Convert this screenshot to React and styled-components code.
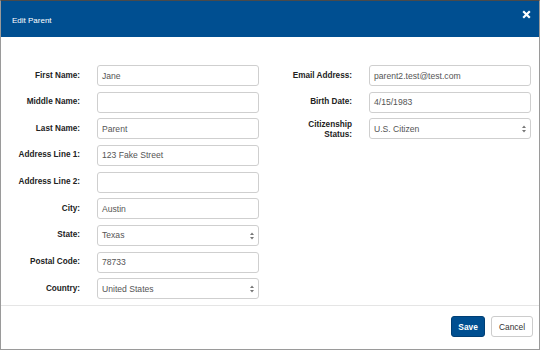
import React from 'react';
import styled, { createGlobalStyle } from 'styled-components';

const GlobalStyle = createGlobalStyle`
  html, body {
    margin: 0;
    padding: 0;
    background: #fff;
  }
  * {
    box-sizing: border-box;
  }
`;

const Modal = styled.div`
  width: 540px;
  height: 350px;
  display: flex;
  flex-direction: column;
  border: 1px solid #9a9a9a;
  border-top-color: #4a4a4a;
  font-family: 'Liberation Sans', Arial, sans-serif;
  background: #fff;
`;

const Header = styled.div`
  height: 36px;
  flex: none;
  display: flex;
  align-items: center;
  justify-content: space-between;
  padding: 0 8px 0 11px;
  background: #004f91;
  color: #fff;
`;

const Title = styled.h4`
  margin: 0;
  font-size: 8px;
  font-weight: normal;
  padding-top: 2px;
`;

const Close = styled.button`
  align-self: flex-start;
  margin-top: 9px;
  padding: 0;
  border: 0;
  background: none;
  width: 9px;
  height: 9px;
  display: flex;
`;

const Body = styled.div`
  flex: 1;
  display: grid;
  grid-template-columns: 249px 249px;
  column-gap: 23px;
  align-items: start;
  padding: 28px 7px 0 9px;
`;

const Fields = styled.div`
  display: grid;
  grid-template-columns: 70px 162px;
  column-gap: 17px;
  row-gap: 5.67px;
`;

const Label = styled.label`
  align-self: ${(p) => (p.$tall ? 'start' : 'center')};
  padding-top: ${(p) => (p.$tall ? '2px' : '0')};
  text-align: right;
  font-size: 8.2px;
  font-weight: bold;
  line-height: 10px;
  color: #222;
`;

const Box = styled.div`
  position: relative;
  height: 21px;
  display: flex;
  align-items: center;
  padding: 0 4px;
  border: 1px solid #cfcfcf;
  border-radius: 3px;
  background: #fff;
  font-size: 8.6px;
  color: #555;
`;

const Arrows = styled.svg`
  position: absolute;
  right: 4px;
  top: 6px;
`;

const Footer = styled.div`
  height: 44px;
  flex: none;
  display: flex;
  align-items: center;
  justify-content: flex-end;
  gap: 6px;
  padding: 0 6px 2px 0;
  border-top: 1px solid #e5e5e5;
`;

const Button = styled.button`
  height: 21px;
  padding: 0 ${(p) => (p.$primary ? '6px' : '7px')};
  border-radius: 3px;
  border: 1px solid ${(p) => (p.$primary ? '#003f75' : '#cccccc')};
  background: ${(p) => (p.$primary ? '#004f91' : '#fff')};
  color: ${(p) => (p.$primary ? '#fff' : '#333')};
  font-family: 'Liberation Sans', Arial, sans-serif;
  font-size: 8.4px;
  font-weight: ${(p) => (p.$primary ? 'bold' : 'normal')};
`;

const left = [
  ['First Name:', 'Jane'],
  ['Middle Name:', ''],
  ['Last Name:', 'Parent'],
  ['Address Line 1:', '123 Fake Street'],
  ['Address Line 2:', ''],
  ['City:', 'Austin'],
  ['State:', 'Texas', true],
  ['Postal Code:', '78733'],
  ['Country:', 'United States', true],
];

const right = [
  ['Email Address:', 'parent2.test@test.com'],
  ['Birth Date:', '4/15/1983'],
  ['Citizenship Status:', 'U.S. Citizen', true, true],
];

const Field = ({ label, value, select, tall }) => (
  <>
    <Label $tall={tall}>{label}</Label>
    <Box>
      {value}
      {select && (
        <Arrows width="4" height="8" viewBox="0 0 4 8">
          <path d="M0 3 L2 0.5 L4 3 Z M0 5 L2 7.5 L4 5 Z" fill="#777" />
        </Arrows>
      )}
    </Box>
  </>
);

const App = () => (
  <>
    <GlobalStyle />
    <Modal>
      <Header>
        <Title>Edit Parent</Title>
        <Close aria-label="close">
          <svg width="9" height="9" viewBox="0 0 9 9">
            <path d="M1.2 1.2 L7.8 7.8 M7.8 1.2 L1.2 7.8" stroke="#fff" strokeWidth="2.2" />
          </svg>
        </Close>
      </Header>
      <Body>
        <Fields>
          {left.map(([l, v, s]) => (
            <Field key={l} label={l} value={v} select={s} />
          ))}
        </Fields>
        <Fields>
          {right.map(([l, v, s, t]) => (
            <Field key={l} label={l} value={v} select={s} tall={t} />
          ))}
        </Fields>
      </Body>
      <Footer>
        <Button $primary>Save</Button>
        <Button>Cancel</Button>
      </Footer>
    </Modal>
  </>
);

export default App;
